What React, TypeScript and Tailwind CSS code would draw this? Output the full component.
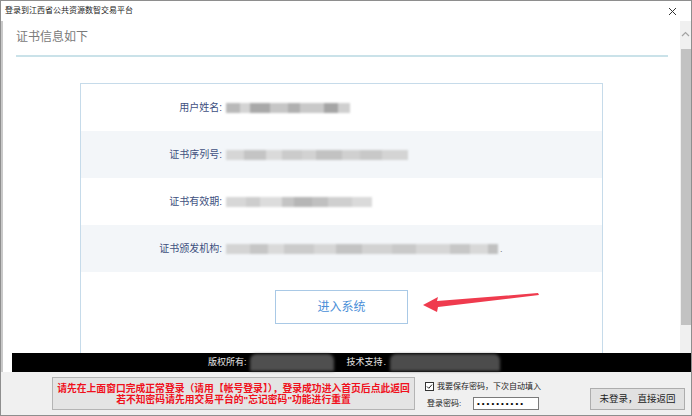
import React from "react";

type Seg = [number, string];

const ROWS: { label: string; segs: Seg[]; tail?: string }[] = [
  {
    label: "用户姓名:",
    segs: [[14, "#b9b9b9"], [10, "#d4d4d4"], [20, "#a9a9a9"], [18, "#c6c6c6"], [12, "#b0b0b0"], [24, "#c9c9c9"], [14, "#a5a5a5"], [12, "#cfcfcf"]],
  },
  {
    label: "证书序列号:",
    segs: [[18, "#d6d6d6"], [22, "#c4c4c4"], [16, "#dadada"], [20, "#cbcbcb"], [14, "#d2d2d2"], [26, "#c2c2c2"], [18, "#d0d0d0"], [22, "#c8c8c8"], [26, "#d4d4d4"]],
  },
  {
    label: "证书有效期:",
    segs: [[20, "#d7d7d7"], [14, "#cdcdcd"], [22, "#dcdcdc"], [12, "#c4c4c4"], [18, "#b6b6b6"], [16, "#c0c0c0"], [24, "#cfcfcf"], [20, "#dadada"]],
  },
  {
    label: "证书颁发机构:",
    segs: [[24, "#d4d4d4"], [18, "#c6c6c6"], [16, "#dadada"], [30, "#cbcbcb"], [22, "#d6d6d6"], [26, "#c3c3c3"], [30, "#d2d2d2"], [24, "#c9c9c9"], [34, "#d6d6d6"], [20, "#c7c7c7"], [18, "#d8d8d8"], [10, "#c0c0c0"]],
    tail: ".",
  },
];

function Smudge({ segs }: { segs: Seg[] }) {
  return (
    <div className="flex items-center blur-[1.2px]">
      {segs.map(([w, c], i) => (
        <div key={i} className="h-[10px]" style={{ width: w, background: c }} />
      ))}
    </div>
  );
}

export default function App() {
  return (
    <div
      className="relative w-[692px] h-[416px] overflow-hidden bg-[#f0f0f0] border border-[#8e8e8e] flex flex-col"
      style={{ fontFamily: '"Liberation Sans", "Noto Sans CJK SC", sans-serif' }}
    >
      {/* title bar */}
      <div className="h-[20px] shrink-0 bg-white flex items-center justify-between pl-[4px] pr-[14px]">
        <span className="text-[8px] leading-none text-[#222]">登录到江西省公共资源数智交易平台</span>
        <svg width="9" height="9" viewBox="0 0 9 9" className="mt-[1px]">
          <path d="M1 1 L8 8 M8 1 L1 8" stroke="#333" strokeWidth="1" />
        </svg>
      </div>

      {/* web view */}
      <div className="h-[332px] shrink-0 flex bg-white border-l-2 border-[#c9c9c9]">
        <div className="flex-1 overflow-hidden">
          <div className="pt-[10px] px-[13px]">
            <div className="text-[12px] leading-[12px] text-[#7a7a7a]">证书信息如下</div>
            <div className="mt-[12px] h-[2px] bg-[#cae2e9] mr-[-1px]" />
          </div>

          <div className="mt-[26px] mx-auto w-[523px] border border-[#c6dbea] bg-white">
            {ROWS.map((r, i) => (
              <div key={r.label} className={`h-[47px] flex items-center ${i % 2 ? "bg-[#f3f6f9]" : "bg-white"}`}>
                <div className="w-[141px] text-right text-[10px] text-[#40507e]">{r.label}</div>
                <div className="ml-[4px] flex items-end">
                  <Smudge segs={r.segs} />
                  {r.tail && <span className="ml-[2px] text-[9px] leading-none text-[#777]">{r.tail}</span>}
                </div>
              </div>
            ))}
            <div className="pt-[18px] pb-[40px] flex justify-center">
              <button className="w-[133px] h-[34px] border border-[#a9c9e6] bg-white text-[12px] text-[#4a8fd8]">
                进入系统
              </button>
            </div>
          </div>
        </div>

        {/* scrollbar */}
        <div className="w-[11px] bg-[#f0f0f0] flex flex-col items-center pt-[10px]">
          <svg width="9" height="6" viewBox="0 0 9 6">
            <path d="M1 5 L4.5 1.5 L8 5" stroke="#a3a3a3" strokeWidth="1.2" fill="none" />
          </svg>
          <div className="mt-[12px] w-[10px] h-[276px] bg-[#c2c2c2]" />
        </div>
      </div>

      {/* footer strip */}
      <div className="h-[19px] shrink-0 flex">
        <div className="w-[11px] bg-white border-l-2 border-[#c9c9c9]" />
        <div className="flex-1 bg-black flex items-center pl-[196px] text-[9px] text-[#e6e6e6]">
          <span>版权所有:</span>
          <div className="ml-[3px] w-[84px] h-[17px] rounded-t-[6px] bg-[#4f4f4f] blur-[1.5px]" />
          <span className="ml-[13px]">技术支持</span>
          <span className="ml-[1px]">.</span>
          <div className="ml-[4px] w-[110px] h-[17px] rounded-t-[6px] bg-[#4c4c4c] blur-[1.5px]" />
        </div>
      </div>

      {/* bottom panel */}
      <div className="flex-1 flex items-start pl-[51px]">
        <div className="mt-[5px] w-[363px] h-[33px] border border-[#b4b4b4] bg-[#e4e4e4] flex flex-col items-center justify-center text-[9.8px] leading-[11px] font-bold text-[#f0101c] whitespace-nowrap">
          <div>请先在上面窗口完成正常登录（请用【帐号登录】），登录成功进入首页后点此返回</div>
          <div>若不知密码请先用交易平台的"忘记密码"功能进行重置</div>
        </div>

        <div className="ml-[10px] mt-[10px] flex flex-col text-[8px] leading-none text-[#222]">
          <div className="flex items-center">
            <svg width="9" height="9" viewBox="0 0 9 9">
              <rect x="0.5" y="0.5" width="8" height="8" fill="white" stroke="#333" />
              <path d="M2 4.5 L3.8 6.3 L7 2.6" stroke="#222" strokeWidth="1" fill="none" />
            </svg>
            <span className="ml-[3px]">我要保存密码，下次自动填入</span>
          </div>
          <div className="flex items-center mt-[6px] ml-[2px]">
            <span className="w-[46px]">登录密码:</span>
            <div className="w-[66px] h-[13px] border border-[#7a7a7a] bg-white flex items-center pl-[3px] text-[8px] tracking-[2px] text-black">
              ••••••••••
            </div>
          </div>
        </div>

        <button className="ml-[49px] mt-[16px] w-[95px] h-[22px] border border-[#adadad] bg-[#e1e1e1] text-[9.5px] text-[#222]">
          未登录，直接返回
        </button>
      </div>

      {/* red annotation arrow */}
      <svg className="absolute left-[415px] top-[285px]" width="130" height="35" viewBox="0 0 130 35">
        <polygon points="7,19 22,11 21,15 122,7 123,9 22,21 21,26" fill="#ef3b4e" />
      </svg>
    </div>
  );
}
